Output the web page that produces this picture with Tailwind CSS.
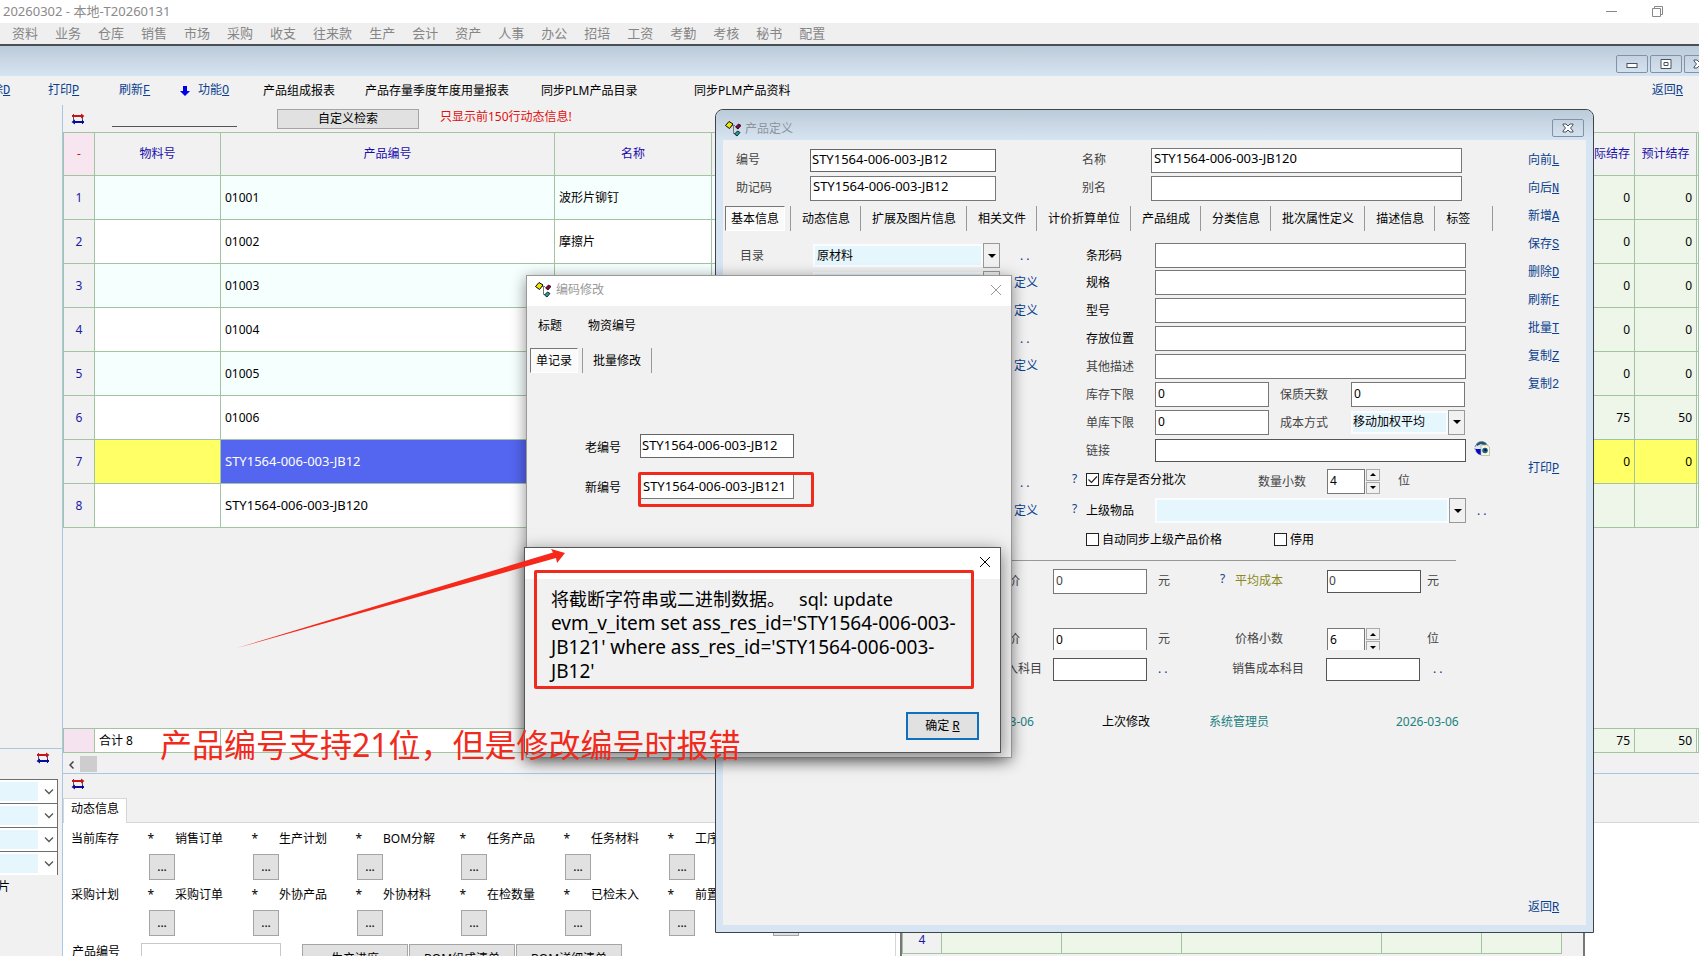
<!DOCTYPE html>
<html lang="zh-CN">
<head>
    <meta charset="UTF-8">
    <meta name="viewport" content="width=device-width, initial-scale=1.0">
    <title>20260302 - 本地-T20260131</title>
    <script src="https://cdn.jsdelivr.net/npm/@tailwindcss/browser@4"></script>
</head>
<body class="relative h-screen overflow-hidden bg-[#f1f1f1] font-['Noto_Sans','Noto_Sans_CJK_SC',sans-serif] text-xs text-black">

    <!-- shared icons -->
    <svg class="hidden">
        <symbol id="tree" viewBox="0 0 16 16">
            <path d="M7 4.500h3M8.500 4.500v8h2" fill="none" stroke="#777" />
            <path d="M0.500 4.500l3.500-4 4 2.500-3.500 4.500z" fill="#f0e800" stroke="#000" />
            <path d="M10.500 6l3-3 2.500 1.500-3 3.500z" fill="#900050" stroke="#000" stroke-width=".8" />
            <path d="M9.500 13l3-3 2.500 1.500-3 3.500z" fill="#20a0a0" stroke="#000" stroke-width=".8" />
        </symbol>
        <symbol id="swap" viewBox="0 0 14 12">
            <path d="M2.500 3v6M11.500 3v6" stroke="#555" />
            <path d="M1 2h9V.5L13.500 3 10 5.500V4H1z" fill="#c81414" />
            <path d="M2.500 1v3" stroke="#c81414" />
            <path d="M13 8H4V6.500L.5 9 4 11.500V10h9z" fill="#0a0aa0" />
            <path d="M11.500 7v4" stroke="#0a0aa0" />
        </symbol>
        <symbol id="close" viewBox="0 0 12 12">
            <path d="M1 1l10 10M11 1L1 11" fill="none" stroke="currentColor" />
        </symbol>
        <symbol id="boxclose" viewBox="0 0 12 10">
            <path d="M1 1h3l2 2 2-2h3v1L8.500 5 11 8v1H8L6 7 4 9H1V8l2.500-3L1 2z" fill="#fff" stroke="#465062" />
        </symbol>
        <symbol id="drop" viewBox="0 0 8 4">
            <path d="M0 0h8L4 4z" fill="#000" />
        </symbol>
        <symbol id="chevron" viewBox="0 0 10 6">
            <path d="M1 .5l4 4 4-4" fill="none" stroke="#555" stroke-width="1.300" />
        </symbol>
    </svg>

    <div class="flex h-full flex-col">
        <header class="flex h-[23px] shrink-0 items-center bg-white pl-[3px] pr-9 text-[#8a8a8a]">
            <h1 class="flex-1 text-[13px]">20260302 - 本地-T20260131</h1>
            <button class="mr-[35px]" aria-label="最小化"><svg class="h-[11px] w-[11px]" viewBox="0 0 11 11"><path d="M0 5.500h11" stroke="#888" /></svg></button>
            <button aria-label="还原"><svg class="h-[11px] w-[11px]" viewBox="0 0 11 11"><path d="M.5 2.500h8v8h-8zM2.500 2.500v-2h8v8h-2" fill="none" stroke="#888" /></svg></button>
        </header>
        <nav class="flex h-[21px] shrink-0 items-center gap-[17px] whitespace-nowrap bg-[#efefef] pl-3 text-[13px] text-[#868686]">
            <a href="#">资料</a><a href="#">业务</a><a href="#">仓库</a><a href="#">销售</a><a href="#">市场</a><a href="#">采购</a><a href="#">收支</a><a href="#">往来款</a><a href="#">生产</a><a href="#">会计</a><a href="#">资产</a><a href="#">人事</a><a href="#">办公</a><a href="#">招培</a><a href="#">工资</a><a href="#">考勤</a><a href="#">考核</a><a href="#">秘书</a><a href="#">配置</a>
        </nav>
        <div class="flex h-8 shrink-0 items-center justify-end gap-0.5 overflow-hidden border-t-2 border-[#4a4f55] bg-linear-to-b from-[#bccbd9] to-[#d7e4f2] pt-1.5">
            <button class="flex h-[18px] w-8 items-center justify-center rounded-xs border border-[#8191a8]" aria-label="最小化"><svg class="h-[10px] w-3" viewBox="0 0 12 10"><rect x="1" y="4.500" width="10" height="4" fill="#fff" stroke="#465062" /></svg></button>
            <button class="flex h-[18px] w-8 items-center justify-center rounded-xs border border-[#8191a8]" aria-label="还原"><svg class="h-[10px] w-3" viewBox="0 0 12 10"><path d="M1 .5h10v9H1zM4 3.500h4v3H4z" fill="#fff" stroke="#465062" /></svg></button>
            <button class="flex h-[18px] w-[15px] items-center justify-end overflow-hidden rounded-l-xs border border-r-0 border-[#8191a8]" aria-label="关闭"><svg class="-mr-1.5 h-[10px] w-3 shrink-0"><use href="#boxclose" /></svg></button>
        </div>

        <div class="flex h-[29px] shrink-0 items-center whitespace-nowrap">
            <a href="#" class="-ml-[9px] w-[57px] text-[#0b3f8f]">除<u class="font-['Liberation_Mono']">D</u></a>
            <a href="#" class="w-[71px] text-[#0b3f8f]">打印<u class="font-['Liberation_Mono']">P</u></a>
            <a href="#" class="w-[61px] text-[#0b3f8f]">刷新<u class="font-['Liberation_Mono']">F</u></a>
            <svg class="mr-2 h-3 w-2.5" viewBox="0 0 10 12"><path d="M3 1h4v5h3l-5 5-5-5h3z" fill="#0000e6" /></svg>
            <a href="#" class="w-[65px] text-[#0b3f8f]">功能<u class="font-['Liberation_Mono']">O</u></a>
            <a href="#" class="w-[102px]">产品组成报表</a>
            <a href="#" class="w-44">产品存量季度年度用量报表</a>
            <a href="#" class="w-[153px]">同步PLM产品目录</a>
            <a href="#">同步PLM产品资料</a>
            <a href="#" class="ml-auto pr-4 text-[#0b3f8f]">返回<u class="font-['Liberation_Mono']">R</u></a>
        </div>

        <div class="flex min-h-0 flex-1">
            <!-- left rail -->
            <aside class="flex w-[62px] shrink-0 flex-col">
                <div class="h-[644px] border-b border-[#a9c6e6]"></div>
                <div class="flex h-[30px] items-center justify-end pr-3"><svg class="mb-3 h-3 w-3.5"><use href="#swap" /></svg></div>
                <div class="mr-1 flex flex-col border-r border-[#6e6e6e] bg-white">
                    <label class="flex h-6 items-center border-t border-[#6e6e6e]"><select aria-label="条件一" class="h-[19px] w-[38px] appearance-none bg-[#e6f6fd]"></select><svg class="ml-1.5 h-1.5 w-2.5"><use href="#chevron" /></svg></label>
                    <label class="flex h-6 items-center border-t border-[#6e6e6e]"><select aria-label="条件二" class="h-[19px] w-[38px] appearance-none bg-[#e6f6fd]"></select><svg class="ml-1.5 h-1.5 w-2.5"><use href="#chevron" /></svg></label>
                    <label class="flex h-6 items-center border-t border-[#6e6e6e]"><select aria-label="条件三" class="h-[19px] w-[38px] appearance-none bg-[#e6f6fd]"></select><svg class="ml-1.5 h-1.5 w-2.5"><use href="#chevron" /></svg></label>
                    <label class="flex h-6 items-center border-t border-[#6e6e6e]"><select aria-label="条件四" class="h-[19px] w-[38px] appearance-none bg-[#e6f6fd]"></select><svg class="ml-1.5 h-1.5 w-2.5"><use href="#chevron" /></svg></label>
                </div>
                <span class="mt-1 -ml-0.5">片</span>
            </aside>

            <main class="flex min-w-0 flex-1 flex-col border-l border-[#a9c6e6]">
                <div class="flex h-[27px] shrink-0 items-center">
                    <svg class="ml-2 h-3 w-3.5"><use href="#swap" /></svg>
                    <input aria-label="检索" class="ml-[27px] h-4 w-[125px] border-b border-[#555] bg-transparent">
                    <button class="ml-10 h-5 w-[142px] border border-[#a5a5a5] bg-[#e1e1e1]">自定义检索</button>
                    <span class="mb-1 ml-[21px] text-[#e01010]">只显示前150行动态信息!</span>
                </div>

                <table class="w-full shrink-0 table-fixed border-collapse bg-white [&_td]:border [&_td]:border-[#a3c4a0] [&_th]:border [&_th]:border-[#a3c4a0] [&_th]:font-normal">
                    <colgroup>
                        <col class="w-[31px]"><col class="w-[126px]"><col class="w-[334px]"><col class="w-[157px]"><col><col class="w-[62px]"><col class="w-[62px]"><col class="w-[2px]">
                    </colgroup>
                    <thead>
                        <tr class="h-[43px] bg-[#f1f1f1] text-[#1a0dab]">
                            <th class="bg-[#f7e5f0] text-[#e01010]">-</th><th>物料号</th><th>产品编号</th><th>名称</th><th></th><th class="whitespace-nowrap pr-1 text-right">实际结存</th><th class="whitespace-nowrap">预计结存</th><th></th>
                        </tr>
                    </thead>
                    <tbody class="[&_tr]:h-11">
                        <tr class="bg-[#f5fffe]"><td class="bg-[#f1f1f1] text-center text-[#1a1aa6]">1</td><td></td><td class="pl-1">01001</td><td class="pl-1">波形片铆钉</td><td></td><td class="bg-[#eef5e9] pr-1 text-right">0</td><td class="bg-[#eef5e9] pr-1 text-right">0</td><td></td></tr>
                        <tr><td class="bg-[#f1f1f1] text-center text-[#1a1aa6]">2</td><td></td><td class="pl-1">01002</td><td class="pl-1">摩擦片</td><td></td><td class="bg-[#eef5e9] pr-1 text-right">0</td><td class="bg-[#eef5e9] pr-1 text-right">0</td><td></td></tr>
                        <tr class="bg-[#f5fffe]"><td class="bg-[#f1f1f1] text-center text-[#1a1aa6]">3</td><td></td><td class="pl-1">01003</td><td></td><td></td><td class="bg-[#eef5e9] pr-1 text-right">0</td><td class="bg-[#eef5e9] pr-1 text-right">0</td><td></td></tr>
                        <tr><td class="bg-[#f1f1f1] text-center text-[#1a1aa6]">4</td><td></td><td class="pl-1">01004</td><td></td><td></td><td class="bg-[#eef5e9] pr-1 text-right">0</td><td class="bg-[#eef5e9] pr-1 text-right">0</td><td></td></tr>
                        <tr class="bg-[#f5fffe]"><td class="bg-[#f1f1f1] text-center text-[#1a1aa6]">5</td><td></td><td class="pl-1">01005</td><td></td><td></td><td class="bg-[#eef5e9] pr-1 text-right">0</td><td class="bg-[#eef5e9] pr-1 text-right">0</td><td></td></tr>
                        <tr><td class="bg-[#f1f1f1] text-center text-[#1a1aa6]">6</td><td></td><td class="pl-1">01006</td><td></td><td></td><td class="bg-[#eef5e9] pr-1 text-right">75</td><td class="bg-[#eef5e9] pr-1 text-right">50</td><td></td></tr>
                        <tr class="bg-[#ffff66]"><td class="bg-[#f1f1f1] text-center text-[#1a1aa6]">7</td><td></td><td class="bg-[#5465ef] pl-1 text-[13px] text-white">STY1564-006-003-JB12</td><td></td><td></td><td class="pr-1 text-right">0</td><td class="pr-1 text-right">0</td><td></td></tr>
                        <tr><td class="bg-[#f1f1f1] text-center text-[#1a1aa6]">8</td><td></td><td class="pl-1 text-[13px]">STY1564-006-003-JB120</td><td></td><td></td><td class="bg-[#eef5e9]"></td><td class="bg-[#eef5e9]"></td><td></td></tr>
                    </tbody>
                </table>

                <table class="mt-[200px] w-full shrink-0 table-fixed border-collapse bg-white [&_td]:border [&_td]:border-[#a3c4a0]">
                    <colgroup>
                        <col class="w-[31px]"><col class="w-[126px]"><col class="w-[334px]"><col class="w-[157px]"><col><col class="w-[62px]"><col class="w-[62px]"><col class="w-[2px]">
                    </colgroup>
                    <tr class="h-6"><td class="bg-[#f5e3ef]"></td><td class="pl-1">合计 8</td><td></td><td></td><td></td><td class="bg-[#eef5e9] pr-1 text-right">75</td><td class="bg-[#eef5e9] pr-1 text-right">50</td><td></td></tr>
                </table>
                <div class="flex h-[21px] shrink-0 items-end border-b border-[#a9c6e6]">
                    <svg class="mx-[6px] mb-1 h-2 w-[5px]" viewBox="0 0 5 8"><path d="M4.500 .5L1 4l3.500 3.500" fill="none" stroke="#444" stroke-width="1.500" /></svg>
                    <span class="mb-px h-4 w-[17px] bg-[#cdcdcd]"></span>
                </div>

                <div class="flex h-[23px] shrink-0 items-center"><svg class="mb-[7px] ml-2 h-3 w-3.5 self-end"><use href="#swap" /></svg></div>
                <div class="flex h-[26px] shrink-0 items-end border-b border-[#d6d6d6]">
                    <button class="-mb-px h-[25px] w-16 border border-b-0 border-[#d6d6d6] bg-white pb-1">动态信息</button>
                </div>
                <div class="flex min-h-0 flex-1 overflow-hidden bg-white">
                    <section class="w-[833px] shrink-0 overflow-hidden border-r border-[#d6d6d6]">
                        <div class="grid grid-cols-[repeat(8,104px)] gap-y-[7px] pl-2 pt-2 whitespace-nowrap">
                            <div><div class="flex h-[18px] w-[83px] justify-between"><span>当前库存</span><span>*</span></div><button class="ml-[78px] mt-[5px] block h-[26px] w-[26px] border border-[#a5a5a5] bg-[#e1e1e1]">...</button></div>
                            <div><div class="flex h-[18px] w-[83px] justify-between"><span>销售订单</span><span>*</span></div><button class="ml-[78px] mt-[5px] block h-[26px] w-[26px] border border-[#a5a5a5] bg-[#e1e1e1]">...</button></div>
                            <div><div class="flex h-[18px] w-[83px] justify-between"><span>生产计划</span><span>*</span></div><button class="ml-[78px] mt-[5px] block h-[26px] w-[26px] border border-[#a5a5a5] bg-[#e1e1e1]">...</button></div>
                            <div><div class="flex h-[18px] w-[83px] justify-between"><span>BOM分解</span><span>*</span></div><button class="ml-[78px] mt-[5px] block h-[26px] w-[26px] border border-[#a5a5a5] bg-[#e1e1e1]">...</button></div>
                            <div><div class="flex h-[18px] w-[83px] justify-between"><span>任务产品</span><span>*</span></div><button class="ml-[78px] mt-[5px] block h-[26px] w-[26px] border border-[#a5a5a5] bg-[#e1e1e1]">...</button></div>
                            <div><div class="flex h-[18px] w-[83px] justify-between"><span>任务材料</span><span>*</span></div><button class="ml-[78px] mt-[5px] block h-[26px] w-[26px] border border-[#a5a5a5] bg-[#e1e1e1]">...</button></div>
                            <div><div class="flex h-[18px] w-[83px] justify-between"><span>工序</span></div></div>
                            <div></div>
                            <div><div class="flex h-[18px] w-[83px] justify-between"><span>采购计划</span><span>*</span></div><button class="ml-[78px] mt-[5px] block h-[26px] w-[26px] border border-[#a5a5a5] bg-[#e1e1e1]">...</button></div>
                            <div><div class="flex h-[18px] w-[83px] justify-between"><span>采购订单</span><span>*</span></div><button class="ml-[78px] mt-[5px] block h-[26px] w-[26px] border border-[#a5a5a5] bg-[#e1e1e1]">...</button></div>
                            <div><div class="flex h-[18px] w-[83px] justify-between"><span>外协产品</span><span>*</span></div><button class="ml-[78px] mt-[5px] block h-[26px] w-[26px] border border-[#a5a5a5] bg-[#e1e1e1]">...</button></div>
                            <div><div class="flex h-[18px] w-[83px] justify-between"><span>外协材料</span><span>*</span></div><button class="ml-[78px] mt-[5px] block h-[26px] w-[26px] border border-[#a5a5a5] bg-[#e1e1e1]">...</button></div>
                            <div><div class="flex h-[18px] w-[83px] justify-between"><span>在检数量</span><span>*</span></div><button class="ml-[78px] mt-[5px] block h-[26px] w-[26px] border border-[#a5a5a5] bg-[#e1e1e1]">...</button></div>
                            <div><div class="flex h-[18px] w-[83px] justify-between"><span>已检未入</span><span>*</span></div><button class="ml-[78px] mt-[5px] block h-[26px] w-[26px] border border-[#a5a5a5] bg-[#e1e1e1]">...</button></div>
                            <div><div class="flex h-[18px] w-[83px] justify-between"><span>前置</span></div><button class="ml-[78px] mt-[5px] block h-[26px] w-[26px] border border-[#a5a5a5] bg-[#e1e1e1]" aria-label="前置"></button></div>
                        </div>
                        <div class="mt-[7px] flex items-start pl-[9px]">
                            <label for="pno" class="w-[69px] pt-px">产品编号</label>
                            <input id="pno" class="mr-[21px] h-[25px] w-[140px] border border-[#c8c8c8]">
                            <button class="mr-px mt-px h-[29px] w-[106px] border border-[#a5a5a5] bg-[#e1e1e1]">生产进度</button>
                            <button class="mr-px mt-px h-[29px] w-[106px] border border-[#a5a5a5] bg-[#e1e1e1]">BOM组成清单</button>
                            <button class="mt-px h-[29px] w-[106px] border border-[#a5a5a5] bg-[#e1e1e1]">BOM详细清单</button>
                        </div>
                    </section>
                    <section class="ml-1 w-[685px] shrink-0 border-x-2 border-[#777] bg-[#f1f1f1]">
                        <table class="mt-[102px] table-fixed border-collapse [&_td]:border [&_td]:border-[#a3c4a0]">
                            <tr class="h-7"><td class="w-[39px] text-center text-[#1a1aa6]">4</td><td class="w-[120px] bg-[#eef5e9]"></td><td class="w-[120px] bg-[#eef5e9]"></td><td class="w-[200px] bg-[#eef5e9]"></td><td class="w-[100px] bg-[#eef5e9]"></td><td class="w-20 bg-[#eef5e9]"></td></tr>
                        </table>
                    </section>
                </div>
            </main>
        </div>
    </div>

    <!-- product definition window -->
    <section class="absolute left-[715px] top-[109px] flex h-[824px] w-[879px] flex-col rounded-t-lg border border-[#3f444b] bg-[#d7e4f2] px-[7px] pb-[7px]">
        <header class="-mx-[7px] flex h-[30px] shrink-0 items-center rounded-t-lg bg-linear-to-b from-[#bccbd9] to-[#d7e4f2] pl-[9px] pr-[9px] pt-2">
            <svg class="h-4 w-4"><use href="#tree" /></svg>
            <h2 class="ml-1 flex-1 text-[#8c949c]">产品定义</h2>
            <button class="mb-0.5 flex h-[18px] w-8 items-center justify-center rounded-xs border border-[#8191a8]" aria-label="关闭"><svg class="h-[10px] w-3"><use href="#boxclose" /></svg></button>
        </header>
        <div class="flex min-h-0 flex-1 bg-[#f1f1f1]">
            <div class="min-w-0 flex-1 whitespace-nowrap">
                <div class="mt-1.5 flex h-7 items-center pl-[13px] text-[#444]">
                    <label for="code" class="w-[74px]">编号</label>
                    <input id="code" value="STY1564-006-003-JB12" class="mr-[86px] h-[23px] w-[186px] border border-[#666] bg-white pb-0.5 pl-px text-[13px] text-black">
                    <label for="name" class="w-[69px]">名称</label>
                    <input id="name" value="STY1564-006-003-JB120" class="h-[25px] w-[311px] border border-[#777] bg-white pb-1 pl-0.5 text-[13px] text-black">
                </div>
                <div class="flex h-7 items-center pl-[13px] text-[#444]">
                    <label for="memo" class="w-[74px]">助记码</label>
                    <input id="memo" value="STY1564-006-003-JB12" class="mr-[86px] h-[25px] w-[186px] border border-[#777] bg-white pb-1 pl-0.5 text-[13px] text-black">
                    <label for="alias" class="w-[69px]">别名</label>
                    <input id="alias" class="h-[25px] w-[311px] border border-[#777] bg-white">
                </div>
                <div class="mt-1 flex h-[25px] pl-0.5 [&>button]:border-r [&>button]:border-[#999] [&>button]:pl-[11px] [&>button]:pr-2.5">
                    <span class="mr-[5px] flex"><button class="border border-b-white border-l-[#777] border-r-white border-t-[#777] bg-[#fafafa] px-[5px]">基本信息</button></span>
                    <button class="border-l">动态信息</button>
                    <button>扩展及图片信息</button>
                    <button>相关文件</button>
                    <button>计价折算单位</button>
                    <button>产品组成</button>
                    <button>分类信息</button>
                    <button>批次属性定义</button>
                    <button>描述信息</button>
                    <button class="w-[58px] text-left">标签</button>
                </div>

                <div class="mt-[11px] flex">
                    <div class="w-[285px] pl-[17px]">
                        <div class="flex h-[27px] items-center">
                            <label for="catalog" class="w-[73px] text-[#444]">目录</label>
                            <select id="catalog" class="h-[23px] w-[170px] appearance-none border-2 border-white/80 bg-[#e6f6fd] pl-0.5"><option>原材料</option></select>
                            <span class="flex h-[25px] w-[17px] items-center justify-center border border-[#999]"><svg class="h-1 w-2"><use href="#drop" /></svg></span>
                        </div>
                        <div class="flex h-7 items-center">
                            <span class="w-[73px]"></span>
                            <select aria-label="类别" class="h-[23px] w-[170px] appearance-none border-2 border-white/80 bg-[#e6f6fd]"></select>
                            <span class="h-[25px] w-[17px] border border-[#999]"></span>
                        </div>
                    </div>
                    <div class="flex w-[62px] flex-col pl-1.5 leading-[27px] text-[#0b3f8f]">
                        <a href="#" class="h-[27px] pl-1.5">. .</a>
                        <a href="#" class="h-7">定义</a>
                        <a href="#" class="h-7">定义</a>
                        <a href="#" class="h-[27px] pl-1.5">. .</a>
                        <a href="#" class="h-[117px]">定义</a>
                        <a href="#" class="h-7 pl-1.5">. .</a>
                        <a href="#" class="h-7">定义</a>
                    </div>
                    <div class="w-[430px] [&_label]:pt-px">
                        <div class="flex h-[27px] items-center pl-4"><label for="barcode" class="w-[69px]">条形码</label><input id="barcode" class="h-[25px] w-[311px] border border-[#777] bg-white"></div>
                        <div class="flex h-[27px] items-center pl-4"><label for="spec" class="w-[69px]">规格</label><input id="spec" class="h-[25px] w-[311px] border border-[#777] bg-white"></div>
                        <div class="flex h-7 items-center pl-4"><label for="model" class="w-[69px]">型号</label><input id="model" class="h-[25px] w-[311px] border border-[#777] bg-white"></div>
                        <div class="flex h-7 items-center pl-4"><label for="place" class="w-[69px]">存放位置</label><input id="place" class="h-[25px] w-[311px] border border-[#777] bg-white"></div>
                        <div class="flex h-7 items-center pl-4 text-[#444]"><label for="desc" class="w-[69px]">其他描述</label><input id="desc" class="h-[25px] w-[311px] border border-[#777] bg-white"></div>
                        <div class="flex h-7 items-center pl-4 text-[#444]">
                            <label for="low" class="w-[69px]">库存下限</label><input id="low" value="0" class="mr-[11px] h-[25px] w-[114px] border border-[#777] bg-white pb-0.5 pl-0.5 text-black">
                            <label for="days" class="w-[71px]">保质天数</label><input id="days" value="0" class="h-[25px] w-[114px] border border-[#777] bg-white pb-0.5 pl-0.5 text-black">
                        </div>
                        <div class="flex h-7 items-center pl-4 text-[#444]">
                            <label for="low2" class="w-[69px]">单库下限</label><input id="low2" value="0" class="mr-[11px] h-[25px] w-[114px] border border-[#777] bg-white pb-0.5 pl-0.5 text-black">
                            <label for="cost" class="w-[71px]">成本方式</label>
                            <select id="cost" class="h-[23px] w-[97px] appearance-none border-2 border-white/80 bg-[#e6f6fd] text-black"><option>移动加权平均</option></select>
                            <span class="flex h-[25px] w-[17px] items-center justify-center border border-[#999]"><svg class="h-1 w-2"><use href="#drop" /></svg></span>
                        </div>
                        <div class="flex h-[29px] items-center pl-4 text-[#444]">
                            <label for="link" class="w-[69px]">链接</label><input id="link" class="h-[23px] w-[311px] border border-[#555] bg-white">
                            <svg class="mb-1.5 ml-2 h-4 w-4" viewBox="0 0 16 16">
                                <circle cx="7.500" cy="8" r="6.500" fill="#dfe8ee" stroke="#6f8fa0" stroke-dasharray="2 1" />
                                <path d="M2 4.500Q7-1 13 4l-2 2-4-2-4 2z" fill="#27566e" />
                                <path d="M1.500 9H7v6Q2 14 1.500 9z" fill="#0808c8" />
                                <path d="M7 5h6l2.500 2v8.500H7z" fill="#fbf8dc" stroke="#aaa" stroke-width=".7" />
                                <circle cx="11" cy="10.500" r="2.800" fill="#186878" /><circle cx="11.500" cy="10" r="1.200" fill="#0a0a70" />
                            </svg>
                        </div>
                        <div class="flex h-8 items-center">
                            <a href="#" class="mb-1 w-4 pl-0.5 text-[#0b3f8f]">?</a>
                            <span class="mb-1 grid h-[13px] w-[13px] *:col-start-1 *:row-start-1">
                                <input type="checkbox" id="lot" checked class="h-[13px] w-[13px] appearance-none border border-[#222] bg-white">
                                <svg class="pointer-events-none h-[13px] w-[13px]" viewBox="0 0 13 13"><path d="M2.500 6.500l3 3 5.500-6" fill="none" stroke="#222" stroke-width="1.200" /></svg>
                            </span>
                            <label for="lot" class="mb-1 w-[159px] pl-[3px]">库存是否分批次</label>
                            <label for="qdec" class="w-[69px] text-[#444]">数量小数</label>
                            <input id="qdec" value="4" class="h-[25px] w-[38px] border border-[#777] bg-white pb-0.5 pl-0.5">
                            <span class="mx-px flex flex-col gap-px">
                                <button class="flex h-3 w-3.5 items-center justify-center border border-[#aaa]" aria-label="增加"><svg class="h-[3px] w-1.5 rotate-180" viewBox="0 0 8 4"><use href="#drop" /></svg></button>
                                <button class="flex h-3 w-3.5 items-center justify-center border border-[#aaa]" aria-label="减少"><svg class="h-[3px] w-1.5"><use href="#drop" /></svg></button>
                            </span>
                            <span class="ml-[17px] text-[#444]">位</span>
                        </div>
                        <div class="flex h-[27px] items-center">
                            <a href="#" class="mb-1 w-4 pl-0.5 text-[#0b3f8f]">?</a>
                            <label for="parent" class="w-[69px]">上级物品</label>
                            <select id="parent" class="h-[25px] w-[294px] appearance-none border-2 border-white/80 bg-[#e6f6fd]"></select>
                            <span class="flex h-[25px] w-[17px] items-center justify-center border border-[#999]"><svg class="h-1 w-2"><use href="#drop" /></svg></span>
                            <a href="#" class="ml-[11px] text-[#0b3f8f]">. .</a>
                        </div>
                        <div class="flex h-[29px] items-center pl-4 pt-px">
                            <input type="checkbox" id="sync" class="h-[13px] w-[13px] appearance-none border border-[#222] bg-white"><label for="sync" class="w-[175px] pl-[3px]">自动同步上级产品价格</label>
                            <input type="checkbox" id="stop" class="h-[13px] w-[13px] appearance-none border border-[#222] bg-white"><label for="stop" class="pl-[3px]">停用</label>
                        </div>
                    </div>
                </div>

                <div class="mr-[72px] mt-[7px] border-t border-[#999]"></div>
                <div class="mt-px grid h-[38px] grid-cols-[297px_33px_105px_62px_15px_92px_100px_auto] items-center text-[#444]">
                    <label for="p1" class="text-right">价</label><span></span>
                    <input id="p1" value="0" class="h-[25px] w-[94px] border border-[#777] bg-white pb-0.5 pl-0.5">
                    <span>元</span><a href="#" class="mb-1 text-[#0b3f8f]">?</a>
                    <label for="avg" class="text-[#8a8a1c]">平均成本</label>
                    <input id="avg" value="0" class="h-[23px] w-[94px] border border-[#555] bg-white pb-0.5 pl-px">
                    <span>元</span>
                </div>
                <div class="mt-[22px] grid h-[34px] grid-cols-[297px_33px_105px_62px_15px_92px_100px_auto] items-center text-[#444]">
                    <label for="p2" class="text-right">价</label><span></span>
                    <input id="p2" value="0" class="h-[22px] w-[94px] border border-b-0 border-[#777] bg-white pl-0.5 text-black">
                    <span>元</span><span></span>
                    <label for="pdec">价格小数</label>
                    <span class="flex h-[22px] items-start overflow-hidden">
                        <input id="pdec" value="6" class="h-[22px] w-[38px] border border-b-0 border-[#777] bg-white pl-0.5 text-black">
                        <span class="mx-px flex flex-col gap-px">
                            <button class="flex h-3 w-3.5 items-center justify-center border border-[#aaa]" aria-label="增加"><svg class="h-[3px] w-1.5 rotate-180" viewBox="0 0 8 4"><use href="#drop" /></svg></button>
                            <button class="flex h-3 w-3.5 items-center justify-center border border-[#aaa]" aria-label="减少"><svg class="h-[3px] w-1.5"><use href="#drop" /></svg></button>
                        </span>
                    </span>
                    <span>位</span>
                </div>
                <div class="grid h-[26px] grid-cols-[319px_11px_105px_74px_94px_107px_auto] items-center text-[#444]">
                    <label for="acc1" class="text-right">入科目</label><span></span>
                    <input id="acc1" class="h-[23px] w-[94px] border border-[#555] bg-white">
                    <a href="#" class="text-[#0b3f8f]">. .</a>
                    <label for="acc2">销售成本科目</label>
                    <input id="acc2" class="h-[23px] w-[94px] border border-[#555] bg-white">
                    <a href="#" class="text-[#0b3f8f]">. .</a>
                </div>
                <div class="mt-[27px] grid h-[26px] grid-cols-[311px_68px_107px_187px_auto] items-center text-[#208080]">
                    <span class="text-right">3-06</span><span></span><span class="text-black">上次修改</span><span>系统管理员</span><span>2026-03-06</span>
                </div>
            </div>
            <nav class="flex w-[58px] flex-col pb-1 pt-1.5 text-[#0b3f8f] *:h-7 *:leading-7">
                <a href="#">向前<u class="font-['Liberation_Mono']">L</u></a>
                <a href="#">向后<u class="font-['Liberation_Mono']">N</u></a>
                <a href="#">新增<u class="font-['Liberation_Mono']">A</u></a>
                <a href="#">保存<u class="font-['Liberation_Mono']">S</u></a>
                <a href="#">删除<u class="font-['Liberation_Mono']">D</u></a>
                <a href="#">刷新<u class="font-['Liberation_Mono']">F</u></a>
                <a href="#">批量<u class="font-['Liberation_Mono']">T</u></a>
                <a href="#">复制<u class="font-['Liberation_Mono']">Z</u></a>
                <a href="#">复制<span class="font-['Liberation_Mono']">2</span></a>
                <a href="#" class="mt-14">打印<u class="font-['Liberation_Mono']">P</u></a>
                <a href="#" class="mt-auto">返回<u class="font-['Liberation_Mono']">R</u></a>
            </nav>
        </div>
    </section>

    <!-- code change window -->
    <section class="absolute left-[526px] top-[275px] h-[483px] w-[486px] border border-[#999] bg-[#f1f1f1] shadow-[0_3px_14px_rgba(0,0,0,0.45)]">
        <header class="flex h-[30px] items-center bg-white pb-0.5 pl-2 pr-[9px] text-[#999]">
            <svg class="h-4 w-4"><use href="#tree" /></svg>
            <h2 class="ml-[5px] flex-1">编码修改</h2>
            <button aria-label="关闭"><svg class="h-3 w-3"><use href="#close" /></svg></button>
        </header>
        <p class="flex gap-[26px] pl-[11px] pt-3"><span>标题</span><span>物资编号</span></p>
        <div class="mt-3.5 flex h-[25px] pl-[3px]">
            <button class="mr-1 border border-b-white border-l-[#777] border-r-white border-t-[#777] bg-[#fafafa] px-[5px]">单记录</button>
            <button class="border-x border-[#999] px-2.5">批量修改</button>
        </div>
        <div class="mt-[61px] flex h-6 items-center pl-[58px]"><label for="oldno" class="w-[55px] pt-[3px]">老编号</label><input id="oldno" value="STY1564-006-003-JB12" class="h-6 w-[154px] border border-[#666] bg-white pb-0.5 pl-px text-[13px]"></div>
        <div class="mt-4 flex h-[25px] items-center pl-[58px]"><label for="newno" class="w-[55px] pt-[3px]">新编号</label><input id="newno" value="STY1564-006-003-JB121" class="h-[25px] w-[154px] border border-[#777] bg-white pb-0.5 pl-0.5 text-[13px]"></div>
    </section>

    <!-- error message -->
    <section role="alertdialog" class="absolute left-[524px] top-[547px] flex h-[206px] w-[477px] flex-col border border-[#555] bg-[#f1f1f1] shadow-[0_4px_16px_rgba(0,0,0,0.5)]">
        <header class="flex h-[31px] shrink-0 items-center justify-end bg-white pb-[3px] pr-[9px]">
            <button aria-label="关闭"><svg class="h-3 w-3"><use href="#close" /></svg></button>
        </header>
        <p class="whitespace-pre pl-[26px] pt-2 text-lg leading-6">将截断字符串或二进制数据。   sql: update</p>
        <p class="whitespace-pre pl-[26px] text-[19px] leading-6">evm_v_item set ass_res_id='STY1564-006-003-
JB121' where ass_res_id='STY1564-006-003-
JB12'</p>
        <button class="mb-3 ml-auto mr-[21px] mt-auto h-7 w-[73px] shrink-0 border-2 border-[#1070c0] bg-[#e1e1e1]">确定 <u class="font-['Liberation_Mono']">R</u></button>
    </section>

    <!-- annotations -->
    <div class="pointer-events-none absolute left-[638px] top-[472px] h-[35px] w-[176px] rounded-xs border-[3px] border-[#f02a1c]"></div>
    <div class="pointer-events-none absolute left-[534px] top-[570px] h-[119px] w-[440px] rounded-xs border-[3px] border-[#f02a1c]"></div>
    <svg class="pointer-events-none absolute left-[237px] top-[548px] h-[102px] w-[330px]" viewBox="0 0 330 102"><path d="M0 100L316 4.500 314 1l14 4-8 10-1-5z" fill="#f5281a" /></svg>
    <p class="pointer-events-none absolute left-[160px] top-[721px] whitespace-nowrap text-[32px] leading-[48px] text-[#f02a1c]">产品编号支持21位，但是修改编号时报错</p>
</body>
</html>
